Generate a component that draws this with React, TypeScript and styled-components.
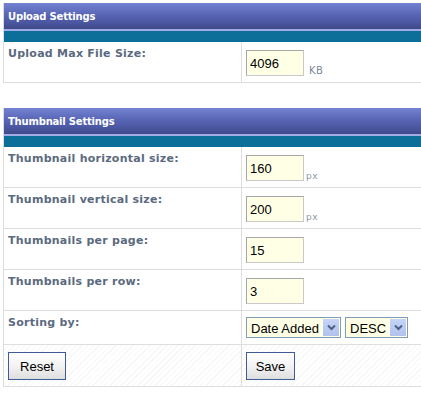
import React from "react";
import styled, { createGlobalStyle } from "styled-components";

const Global = createGlobalStyle`
  html, body { margin: 0; padding: 0; background: #fff; overflow: hidden; }
  body { font-family: "DejaVu Sans", Verdana, sans-serif; }
`;

const Page = styled.div`
  padding: 3px 0 0 3px;
  width: 440px;
  display: flex;
  flex-direction: column;
  gap: 25px;
`;

const Section = styled.section`
  display: flex;
  flex-direction: column;
  border-left: 1px solid #dcdcdc;
`;

const Header = styled.div`
  height: 26px;
  display: flex;
  align-items: center;
  padding-left: 4px;
  background: linear-gradient(to bottom, #7482d2 0%, #5663b3 50%, #3f4a8c 100%);
  border-bottom: 2px solid #a3abe6;
  color: #fff;
  font-weight: bold;
  font-size: 10px;
  letter-spacing: -0.2px;
`;

const Band = styled.div`
  height: 11px;
  background: #0c6f99;
`;

const Row = styled.div<{ $hatch?: boolean }>`
  display: grid;
  grid-template-columns: 238px 1fr;
  border-bottom: 1px solid #dedede;
  background: ${(p) =>
    p.$hatch
      ? "repeating-linear-gradient(135deg, #ffffff 0px, #ffffff 3px, #f6f6f6 3px, #f6f6f6 4px)"
      : "#fff"};
`;

const LabelCell = styled.div`
  padding: 5px 4px 0 4px;
  border-right: 1px solid #dedede;
  color: #5b6a80;
  font-weight: bold;
  font-size: 11px;
  letter-spacing: 0.25px;
  line-height: 14px;
`;

const ValueCell = styled.div<{ $padTop?: number; $padBottom?: number }>`
  display: flex;
  align-items: flex-end;
  gap: 2px;
  padding: ${(p) => p.$padTop ?? 8}px 4px ${(p) => p.$padBottom ?? 6}px 4px;
`;

const TextInput = styled.input`
  box-sizing: border-box;
  width: 58px;
  height: 26px;
  border: 1px solid #a7a7a7;
  border-right-color: #c9c9c9;
  border-bottom-color: #c9c9c9;
  background: #ffffe6;
  padding: 0 3px;
  font-family: "Liberation Sans", Arial, sans-serif;
  font-size: 13px;
  color: #000;
  outline: none;
`;

const Unit = styled.span<{ $big?: boolean }>`
  font-family: "DejaVu Sans", Verdana, sans-serif;
  font-size: ${(p) => (p.$big ? 10 : 9)}px;
  color: ${(p) => (p.$big ? "#7a8898" : "#8c98a6")};
  margin-left: ${(p) => (p.$big ? 3 : 0)}px;
  line-height: ${(p) => (p.$big ? 11 : 9)}px;
  letter-spacing: 0.5px;
`;

const SelectWrap = styled.div<{ $w: number }>`
  position: relative;
  box-sizing: border-box;
  width: ${(p) => p.$w}px;
  height: 21px;
  border: 1px solid #7f9db9;
  background: #ffffe6;
  margin-right: 2px;
`;

const NativeSelect = styled.select`
  appearance: none;
  -webkit-appearance: none;
  width: 100%;
  height: 100%;
  border: none;
  background: transparent;
  padding: 0 0 0 4px;
  font-family: "Liberation Sans", Arial, sans-serif;
  font-size: 13px;
  color: #000;
  outline: none;
`;

const Arrow = styled.span`
  position: absolute;
  top: 1px;
  right: 1px;
  width: 16px;
  height: 17px;
  background: linear-gradient(to bottom, #c6d4f7, #b0c2ee);
  display: flex;
  align-items: center;
  justify-content: center;
  pointer-events: none;
`;

const Button = styled.button<{ $w: number }>`
  box-sizing: border-box;
  width: ${(p) => p.$w}px;
  height: 28px;
  border: 1px solid #3e5c9a;
  background: linear-gradient(to bottom, #ffffff 0%, #f3f3f3 50%, #dedede 100%);
  font-family: "Liberation Sans", Arial, sans-serif;
  font-size: 13px;
  color: #000;
  padding: 0;
`;

const ButtonCell = styled.div<{ $border?: boolean }>`
  padding: 7px 4px 6px 4px;
  ${(p) => (p.$border ? "border-right: 1px solid #dedede;" : "")}
`;

const Chevron = () => (
  <svg width="9" height="7" viewBox="0 0 9 7">
    <path d="M1 1.5 L4.5 5 L8 1.5" fill="none" stroke="#4d6185" strokeWidth="2" />
  </svg>
);

const Select = ({ w, options }: { w: number; options: string[] }) => (
  <SelectWrap $w={w}>
    <NativeSelect defaultValue={options[0]}>
      {options.map((o) => (
        <option key={o}>{o}</option>
      ))}
    </NativeSelect>
    <Arrow>
      <Chevron />
    </Arrow>
  </SelectWrap>
);

const InputRow = ({
  label,
  value,
  unit,
  big,
}: {
  label: string;
  value: string;
  unit?: string;
  big?: boolean;
}) => (
  <Row>
    <LabelCell>{label}</LabelCell>
    <ValueCell>
      <TextInput defaultValue={value} />
      {unit && <Unit $big={big}>{unit}</Unit>}
    </ValueCell>
  </Row>
);

export default function App() {
  return (
    <>
      <Global />
      <Page>
        <Section>
          <Header>Upload Settings</Header>
          <Band />
          <InputRow label="Upload Max File Size:" value="4096" unit="KB" big />
        </Section>
        <Section>
          <Header>Thumbnail Settings</Header>
          <Band />
          <InputRow label="Thumbnail horizontal size:" value="160" unit="px" />
          <InputRow label="Thumbnail vertical size:" value="200" unit="px" />
          <InputRow label="Thumbnails per page:" value="15" />
          <InputRow label="Thumbnails per row:" value="3" />
          <Row>
            <LabelCell>Sorting by:</LabelCell>
            <ValueCell $padTop={6} $padBottom={6}>
              <Select w={95} options={["Date Added", "Title", "File Name"]} />
              <Select w={63} options={["DESC", "ASC"]} />
            </ValueCell>
          </Row>
          <Row $hatch>
            <ButtonCell $border>
              <Button $w={58}>Reset</Button>
            </ButtonCell>
            <ButtonCell>
              <Button $w={49}>Save</Button>
            </ButtonCell>
          </Row>
        </Section>
      </Page>
    </>
  );
}
